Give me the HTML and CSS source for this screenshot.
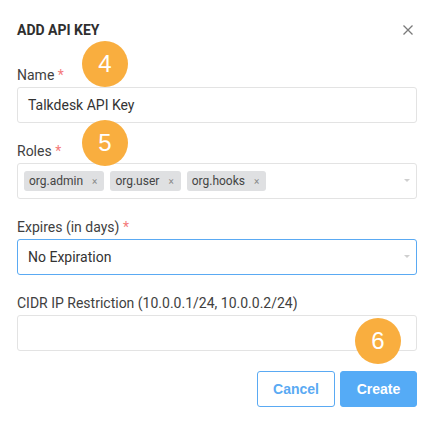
FILE: index.html
```html
<!DOCTYPE html>
<html>
<head>
<meta charset="utf-8">
<link rel="stylesheet" href="styles.css">
</head>
<body>
<div class="dialog">
  <div class="header">
    <h1 class="title">ADD API KEY</h1>
    <svg class="close" width="10" height="10" viewBox="0 0 10 10"><path d="M0.5 0.5 L9.5 9.5 M9.5 0.5 L0.5 9.5" stroke="#7a7a7a" stroke-width="1.3" fill="none"/></svg>
  </div>
  <div class="field">
    <label class="label">Name <span class="req">*</span></label>
    <div class="control"><span class="value">Talkdesk API Key</span></div>
  </div>
  <div class="field">
    <label class="label">Roles <span class="req">*</span></label>
    <div class="control select tags-control">
      <span class="tag">org.admin<span class="tag-x">×</span></span>
      <span class="tag">org.user<span class="tag-x">×</span></span>
      <span class="tag">org.hooks<span class="tag-x">×</span></span>
      <span class="caret"></span>
    </div>
  </div>
  <div class="field">
    <label class="label">Expires (in days) <span class="req">*</span></label>
    <div class="control select focused"><span class="value">No Expiration</span><span class="caret"></span></div>
  </div>
  <div class="field">
    <label class="label">CIDR IP Restriction (10.0.0.1/24, 10.0.0.2/24)</label>
    <div class="control"></div>
  </div>
  <div class="actions">
    <button class="btn btn-outline">Cancel</button>
    <button class="btn btn-primary">Create</button>
  </div>
  <span class="badge badge-4">4</span>
  <span class="badge badge-5">5</span>
  <span class="badge badge-6">6</span>
</div>
</body>
</html>
```
FILE: styles.css
```css
html, body {
  margin: 0;
  padding: 0;
  background: #ffffff;
}
body {
  font-family: Roboto, "Liberation Sans", sans-serif;
  color: #3c3c3c;
  width: 435px;
  height: 423px;
  overflow: hidden;
}
.dialog {
  position: relative;
  padding: 22px 18px 0 17px;
  width: 400px;
}
.header {
  display: flex;
  justify-content: space-between;
  align-items: center;
  height: 16px;
  margin-bottom: 29px;
}
.title {
  margin: 0;
  font-size: 14px;
  line-height: 16px;
  font-weight: 700;
  color: #2f2f2f;
  letter-spacing: 0;
}
.close {
  margin-right: 4px;
  display: block;
}
.field {
  display: flex;
  flex-direction: column;
  margin-bottom: 20px;
}
.label {
  font-size: 14px;
  line-height: 16px;
  margin-bottom: 4px;
  color: #3f3f3f;
}
.req {
  color: #f47a7a;
}
.control {
  position: relative;
  box-sizing: border-box;
  height: 36px;
  border: 1px solid #e3e3e3;
  border-radius: 3px;
  display: flex;
  align-items: center;
  padding: 0 10px;
  font-size: 14px;
  color: #333;
}
.control.focused {
  border-color: #5aaaf3;
}
.tags-control {
  padding: 0 6px;
  gap: 6px;
}
.tag {
  display: inline-flex;
  align-items: center;
  height: 20px;
  box-sizing: border-box;
  padding: 0 7px 0 5px;
  background: #dfe0e2;
  border-radius: 3px;
  font-size: 12px;
  color: #444;
}
.tag-x {
  margin-left: 9px;
  font-size: 10px;
  color: #8a8a8a;
}
.caret {
  position: absolute;
  right: 6px;
  top: 15px;
  width: 0;
  height: 0;
  border-left: 3px solid transparent;
  border-right: 3px solid transparent;
  border-top: 3px solid #cfcfcf;
}
.actions {
  display: flex;
  justify-content: flex-end;
  gap: 5px;
}
.btn {
  box-sizing: border-box;
  height: 36px;
  border-radius: 3px;
  font-family: "Liberation Sans", Arial, sans-serif;
  font-size: 14px;
  font-weight: 700;
  cursor: pointer;
}
.btn-outline {
  width: 78px;
  background: #fff;
  color: #5aaaf3;
  border: 1px solid #5aaaf3;
}
.btn-primary {
  width: 77px;
  background: #55abf6;
  color: #fff;
  border: 1px solid #55abf6;
}
.badge {
  position: absolute;
  width: 46px;
  height: 46px;
  border-radius: 50%;
  background: #f9ae3f;
  color: #fff;
  font-family: "Liberation Sans", Arial, sans-serif;
  font-size: 24px;
  line-height: 46px;
  text-align: center;
}
.badge-4 { left: 82px; top: 41px; }
.badge-5 { left: 82px; top: 120px; }
.badge-6 { left: 355px; top: 318px; }
```
